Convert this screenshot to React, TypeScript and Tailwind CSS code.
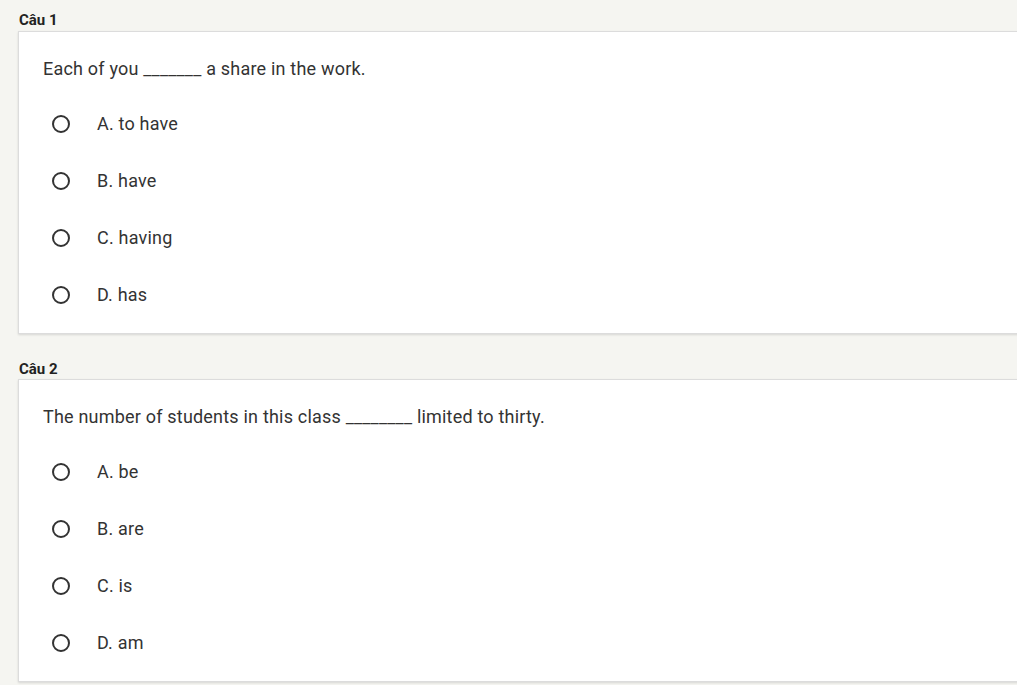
import React from 'react';

type Question = {
	label: string;
	text: string;
	options: string[];
};

const questions: Question[] = [
	{
		label: 'Câu 1',
		text: 'Each of you _______ a share in the work.',
		options: ['A. to have', 'B. have', 'C. having', 'D. has'],
	},
	{
		label: 'Câu 2',
		text: 'The number of students in this class ________ limited to thirty.',
		options: ['A. be', 'B. are', 'C. is', 'D. am'],
	},
];

function QuestionCard({ q, first }: { q: Question; first: boolean }) {
	return (
		<div className={first ? '' : 'mt-[25px]'}>
			<div className="pl-px text-[15px] leading-[20px] font-bold text-[#222]">{q.label}</div>
			<div className={`${first ? 'mt-px' : ''} -mr-4 bg-white border border-[#dcdcdc] shadow-[0_1px_2px_rgba(0,0,0,0.12)] pt-[25px] pb-[10px] pl-6`}>
				<p className="text-[18px] leading-[24px] tracking-[0.2px] text-[#333]">{q.text}</p>
				<div className="mt-[14px]">
					{q.options.map((opt) => (
						<label key={opt} className="flex items-center h-[57px] pl-[9px]">
							<span className="w-[18px] h-[18px] rounded-full border-2 border-[#333] shrink-0" />
							<span className="ml-[27px] text-[18px] tracking-[0.2px] text-[#333]">{opt}</span>
						</label>
					))}
				</div>
			</div>
		</div>
	);
}

export default function App() {
	return (
		<div
			className="min-h-[685px] bg-[#f5f5f1] pt-[10px] pl-[18px] overflow-hidden"
			style={{ fontFamily: 'Roboto, "Noto Sans", sans-serif' }}
		>
			{questions.map((q, i) => (
				<QuestionCard key={q.label} q={q} first={i === 0} />
			))}
		</div>
	);
}
